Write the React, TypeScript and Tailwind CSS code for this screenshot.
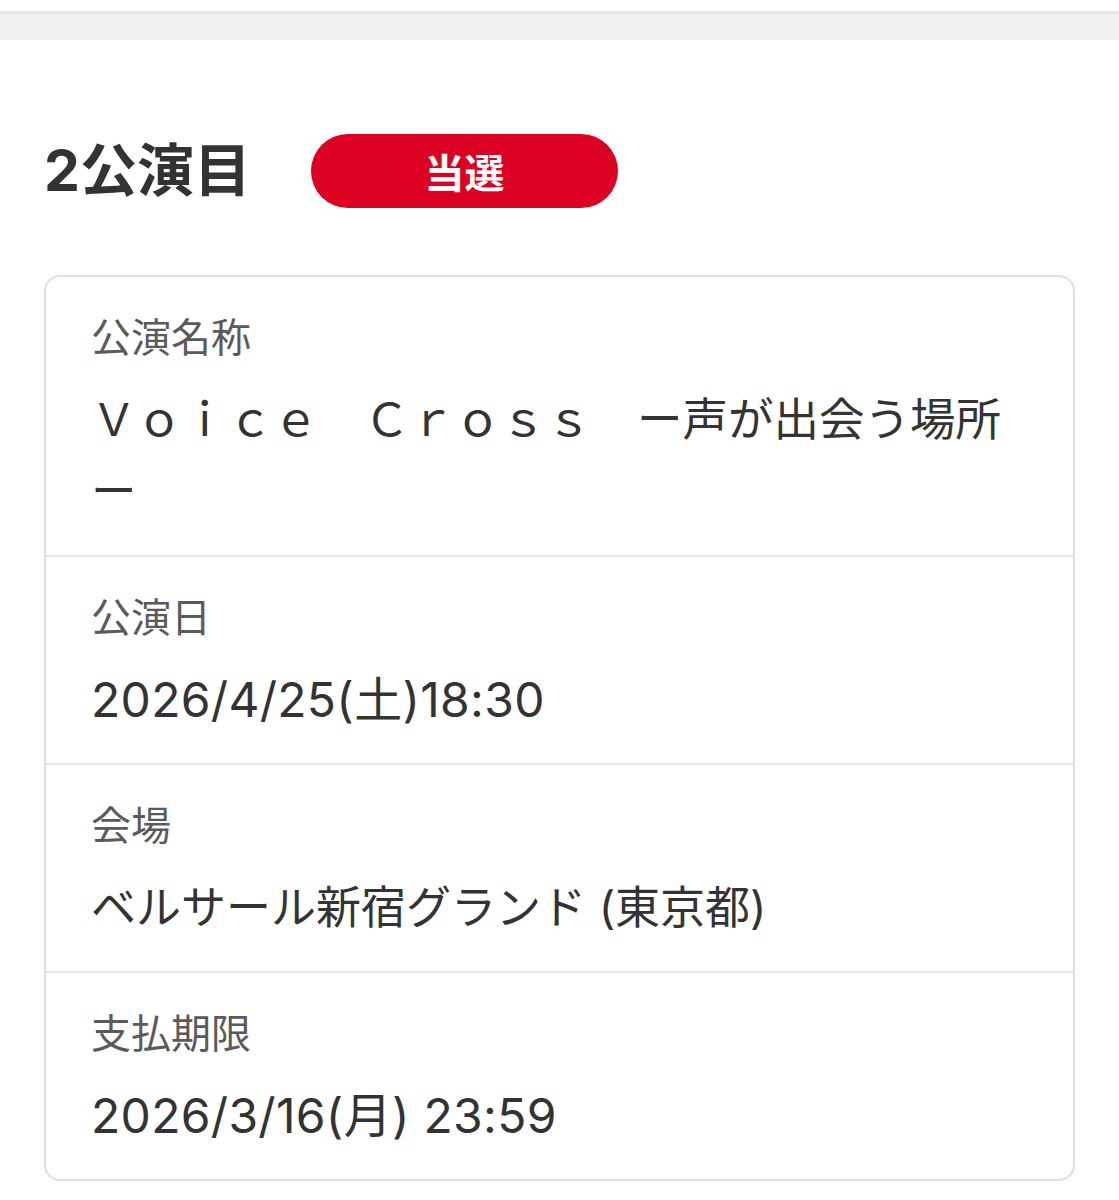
const font = "font-['Noto_Sans_CJK_JP','Noto_Sans',sans-serif]";
const latin = "font-['Inter','Noto_Sans_CJK_JP',sans-serif]";

interface Row {
  label: string;
  value: string;
  size: string;
}

const rows: Row[] = [
  { label: "公演名称", value: "Ｖｏｉｃｅ　Ｃｒｏｓｓ　ー声が出会う場所ー", size: "text-[45.5px]" },
  { label: "公演日", value: "2026/4/25(土)18:30", size: "text-[48px] tracking-[0.3px]" },
  { label: "会場", value: "ベルサール新宿グランド (東京都)", size: "text-[45px]" },
  { label: "支払期限", value: "2026/3/16(月) 23:59", size: "text-[48px] tracking-[0.3px]" },
];

export default function App() {
  return (
    <div className={`min-h-[1200px] bg-white ${font}`}>
      {/* TOP BAR */}
      <div className="h-[11px]" />
      <div className="h-[29px] bg-[#efefef] border-t-[3px] border-[#e6e6e6]" />

      <div className="px-[44px]">
        {/* HEADER */}
        <div className="flex items-center gap-[60px] pt-[94px]">
          <h1 className={`text-[57px] leading-[74px] font-bold text-[#333] ${latin}`}>2公演目</h1>
          <div className="flex items-center justify-center w-[307px] h-[74px] rounded-full bg-[#dc0022]">
            <span className="text-[40px] font-bold text-white leading-none">当選</span>
          </div>
        </div>

        {/* DETAIL CARD */}
        <div className="mt-[67px] border-2 border-[#dedede] rounded-[16px] overflow-hidden">
          {rows.map((r, i) => (
            <div
              key={r.label}
              className={`px-[45px] pt-[34px] pb-[27px] ${i > 0 ? "border-t-2 border-[#e8e8e8]" : ""}`}
            >
              <p className="text-[40px] leading-[48px] text-[#5a5a5a]">{r.label}</p>
              <p className={`mt-[25px] leading-[72px] text-[#333] [line-break:anywhere] ${r.size} ${latin}`}>
                {r.value}
              </p>
            </div>
          ))}
        </div>
      </div>
    </div>
  );
}
